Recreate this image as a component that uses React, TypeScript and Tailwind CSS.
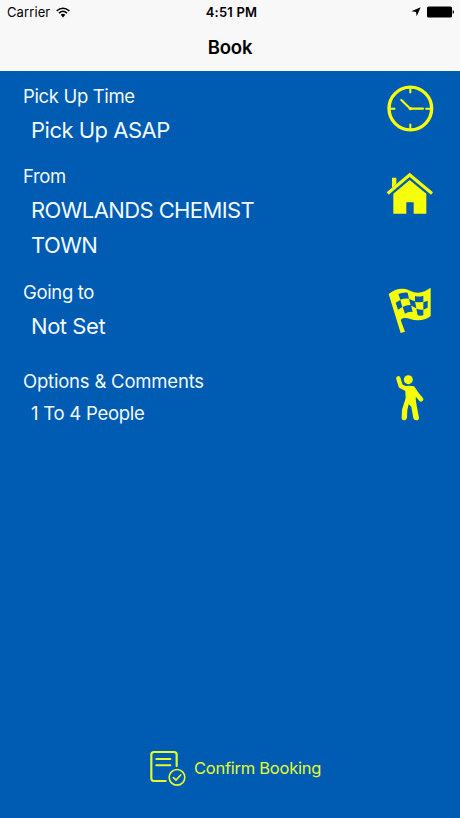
import type { ReactNode } from 'react';

type Row = {
  label: string;
  values: string[];
  icon: ReactNode;
  className: string;
  iconClassName: string;
  labelClassName: string;
  valueClassName: string;
};

function classNames(...xs: (string | false | null | undefined)[]) {
  return xs.filter(Boolean).join(' ');
}

function ClockIcon() {
  return (
    <svg viewBox="0 0 180 180" className="h-full w-full" fill="none" stroke="currentColor" aria-hidden>
      <circle cx="91" cy="85.5" r="64" strokeWidth="10" />
      <path d="M91 25v15M91 131v15M31 86h15M136 86h15" strokeWidth="6" />
      <path d="M64 60l27 26h38" strokeWidth="6.5" strokeLinecap="round" strokeLinejoin="round" />
      <circle cx="91" cy="86" r="5" fill="currentColor" stroke="none" />
    </svg>
  );
}

function HouseIcon() {
  return (
    <svg viewBox="0 0 180 180" className="h-full w-full" fill="currentColor" aria-hidden>
      <path d="M36 38h13v18L36 68z" />
      <path d="M20 82L89 23l70 59-6 7-64-53-63 53z" />
      <path d="M40 86l49-41 50 41v60h-38v-34H79v34H40z" />
    </svg>
  );
}

function FlagIcon() {
  return (
    <svg viewBox="0 0 180 180" className="h-full w-full" aria-hidden>
      <path
        d="M26 42C40 30 55 25 70 26c18 1 27 13 45 12 14-1 25-7 37-15v85c-11 9-24 13-39 13-17 0-27-8-40-7-6 1-8 3-11 6l13 35-13 4z"
        fill="currentColor"
      />
      <g className="fill-[#005bb2]">
        <path d="M55 42q13-6 28-4l4 18q-13-2-26 3z" />
        <path d="M47 68l14-8 6 21-13 8z" />
        <path d="M87 56q9 5 18 8l4 21q-10-4-17-9z" />
        <path d="M105 48q12 4 25-1v18q-12 4-25 0z" />
        <path d="M130 67l13-5v21l-13 6z" />
        <path d="M68 81q12-7 25-6l5 21q-12-2-23 5z" />
        <path d="M109 86q10 4 21 3v17q-9 2-17 0z" />
      </g>
    </svg>
  );
}

function PersonIcon() {
  return (
    <svg viewBox="0 0 180 180" className="h-full w-full" fill="none" stroke="currentColor" aria-hidden>
      <circle cx="85" cy="29" r="13.5" fill="currentColor" stroke="none" />
      <path d="M55 25l7 23 21 11" strokeWidth="13" strokeLinecap="round" strokeLinejoin="round" />
      <path d="M98 57l14 18 11 13" strokeWidth="14" strokeLinecap="round" strokeLinejoin="round" />
      <path
        d="M70 50q14-5 32-1l8 11-3 27 3 20 7 36q0 8-8 8t-9-7l-6-34-8-7-4 17-1 23q-2 8-9 8-8-1-7-9l1-23 11-34-1-20z"
        fill="currentColor"
        stroke="none"
      />
    </svg>
  );
}

function ConfirmIcon() {
  return (
    <svg viewBox="0 0 114 114" className="h-[38px] w-[38px]" fill="none" stroke="currentColor" strokeLinecap="round" aria-hidden>
      <path d="M53 99H18q-8 0-8-8V20q0-8 8-8h60q8 0 8 8v34" strokeWidth="6.5" />
      <path d="M25 33h42M25 52h42" strokeWidth="6" />
      <circle cx="87" cy="88" r="23.5" strokeWidth="5" />
      <path d="M76 89l8 7 14-15" strokeWidth="5" />
    </svg>
  );
}

const rows: Row[] = [
  {
    label: 'Pick Up Time',
    values: ['Pick Up ASAP'],
    icon: <ClockIcon />,
    className: 'h-[90px] pt-[10px]',
    iconClassName: '-mt-px',
    labelClassName: 'tracking-[-0.35px]',
    valueClassName: 'mt-px text-[22px] tracking-[-0.5px]',
  },
  {
    label: 'From',
    values: ['ROWLANDS CHEMIST', 'TOWN'],
    icon: <HouseIcon />,
    className: 'h-[116px]',
    iconClassName: 'mt-1',
    labelClassName: 'tracking-[-0.35px]',
    valueClassName: 'mt-px text-[22px] tracking-[-0.6px]',
  },
  {
    label: 'Going to',
    values: ['Not Set'],
    icon: <FlagIcon />,
    className: 'h-[89px]',
    iconClassName: 'mt-[3px]',
    labelClassName: 'tracking-[-0.35px]',
    valueClassName: 'mt-px text-[22px] tracking-[-0.45px]',
  },
  {
    label: 'Options & Comments',
    values: ['1 To 4 People'],
    icon: <PersonIcon />,
    className: 'h-[90px]',
    iconClassName: 'mt-1',
    labelClassName: 'tracking-[-0.2px]',
    valueClassName: '-mt-px text-[18.5px] tracking-[-0.25px]',
  },
];

function StatusBar() {
  return (
    <div className="grid h-6 grid-cols-3 items-center text-[13px] text-black">
      <div className="flex items-center gap-[6px] pt-px pl-[7px]">
        <span className="tracking-[0.1px]">Carrier</span>
        <svg viewBox="0 0 42 32" className="mb-px h-[11px] w-[14px]" fill="none" stroke="currentColor" aria-hidden>
          <path d="M2 11Q21-5 40 11" strokeWidth="4.5" />
          <path d="M9 18Q21 7 33 18" strokeWidth="4.5" />
          <path d="M14 23q7-6 14 0l-7 8z" fill="currentColor" stroke="none" />
        </svg>
      </div>
      <div className="pt-px pl-[3px] text-center font-semibold tracking-[0.2px]">4:51 PM</div>
      <div className="flex items-center justify-end gap-[6px] pr-[6px]">
        <svg viewBox="0 0 30 30" className="h-[10px] w-[10px]" fill="currentColor" aria-hidden>
          <path d="M29 1L17 28l-2-13L1 13z" />
        </svg>
        <svg viewBox="0 0 27 12" className="h-3 w-[27px]" fill="currentColor" aria-hidden>
          <rect x="0" y="0.5" width="25" height="11" rx="1.5" />
          <path d="M25.7 4q1.3.6 1.3 2t-1.3 2z" />
        </svg>
      </div>
    </div>
  );
}

export default function App() {
  return (
    <div className="flex h-[818px] w-[460px] flex-col overflow-hidden bg-[#005bb2] font-['Inter','Liberation_Sans',sans-serif]">
      <header className="h-[71px] shrink-0 bg-[#f8f8f8]">
        <StatusBar />
        <h1 className="text-center text-[18.5px] leading-[46px] font-semibold tracking-[-0.2px] text-black">Book</h1>
      </header>

      <main className="flex-1">
        {rows.map((row) => (
          <section key={row.label} className={classNames('flex items-start justify-between pr-5 pl-[23px]', row.className)}>
            <div className="text-[#f2faff]">
              <h2 className={classNames('text-[18.5px] leading-[31px]', row.labelClassName)}>{row.label}</h2>
              <div className={classNames('pl-2 leading-[35px]', row.valueClassName)}>
                {row.values.map((value) => (
                  <div key={value}>{value}</div>
                ))}
              </div>
            </div>
            <div className={classNames('h-[60px] w-[60px] shrink-0 text-[#f6ff0a]', row.iconClassName)}>{row.icon}</div>
          </section>
        ))}
      </main>

      <footer className="flex h-[70px] shrink-0 justify-center pl-[9px] text-[#e4fb2c]">
        <button type="button" className="flex h-[38px] items-center gap-2">
          <ConfirmIcon />
          <span className="pt-[2px] text-[16.5px] tracking-[-0.25px]">Confirm Booking</span>
        </button>
      </footer>
    </div>
  );
}
